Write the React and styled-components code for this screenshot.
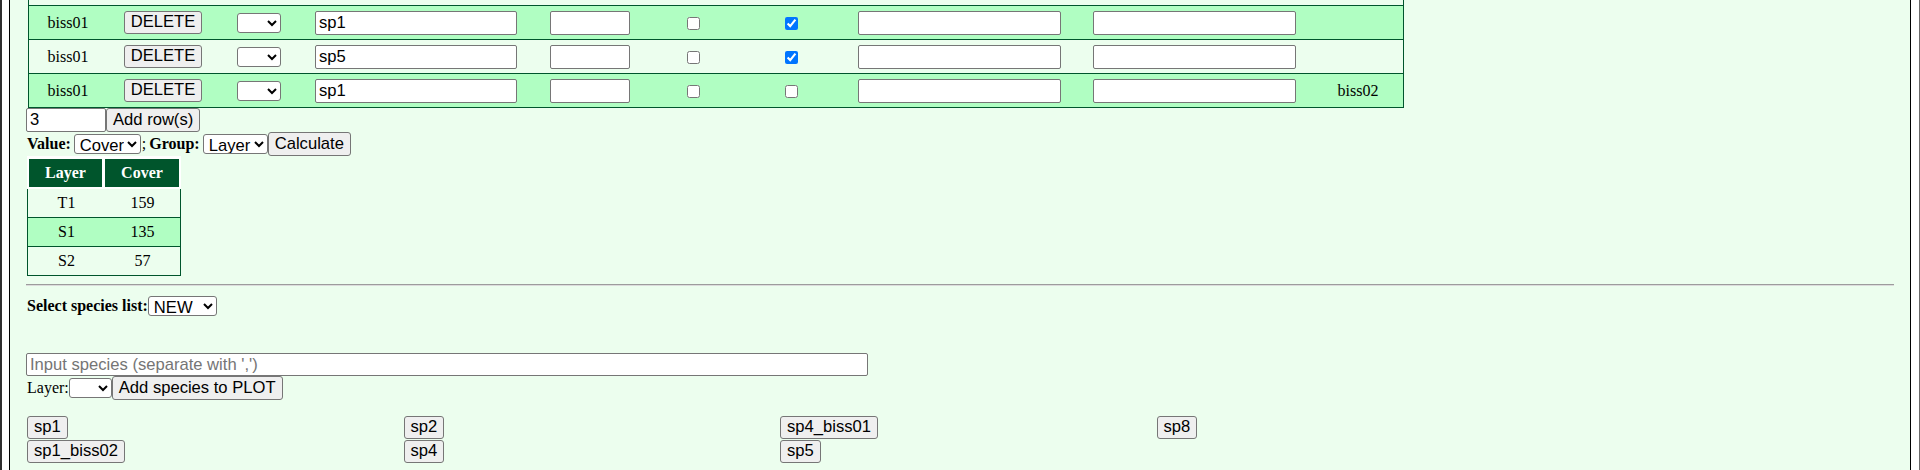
import React from "react";
import styled, { createGlobalStyle, css } from "styled-components";

const GlobalStyle = createGlobalStyle`
  html, body { margin: 0; padding: 0; background: #ffffff; }
  body {
    font-family: "Liberation Serif", "Times New Roman", serif;
    font-size: 16px;
    color: #000;
  }
`;

const GREEN_DARK = "#00552c";
const ROW_GREEN = "#b0fec2";
const BG = "#ecfeee";

const controlFont = css`
  font-family: "Liberation Sans", Arial, sans-serif;
  font-size: 16.6px;
  color: #000;
`;

const Frame = styled.div`
  display: flex;
  min-height: 100vh;
  box-sizing: border-box;
  border-left: 2px solid #2f2f2f;
  border-right: 1px solid #6b6b6b;
  padding: 0 8px 0 7px;
`;

const Container = styled.div`
  flex: 1;
  min-width: 0;
  border-left: 1px solid #000;
  border-right: 1px solid #000;
  background: ${BG};
  padding: 0 16px 40px;
`;

const MainTable = styled.table`
  border-collapse: separate;
  border-spacing: 0;
  table-layout: fixed;
  width: 1376px;
  margin-left: 2px;
  border-left: 1px solid ${GREEN_DARK};
  border-right: 1px solid ${GREEN_DARK};
`;

const Col = styled.col`
  width: ${(p) => p.$w}px;
`;

const Row = styled.tr`
  background: ${(p) => (p.$green ? ROW_GREEN : "transparent")};
`;

const Cell = styled.td`
  height: ${(p) => (p.$stub ? 5 : 33)}px;
  padding: 0;
  text-align: center;
  vertical-align: middle;
  border-bottom: 1px solid ${GREEN_DARK};
  white-space: nowrap;
`;

const TextInput = styled.input`
  ${controlFont};
  box-sizing: border-box;
  width: ${(p) => p.$w}px;
  height: ${(p) => p.$h || 24}px;
  padding: 1px 3px;
  margin: 0;
  border: 1px solid #767676;
  border-radius: 2px;
  background: #fff;
  vertical-align: middle;
  &::placeholder {
    color: #757575;
  }
`;

const Button = styled.button`
  ${controlFont};
  box-sizing: border-box;
  height: ${(p) => p.$h || 23}px;
  padding: 0 6px;
  margin: 0;
  border: 1px solid #767676;
  border-radius: 3px;
  background: #efefef;
  line-height: 1;
  vertical-align: middle;
  white-space: nowrap;
`;

const Select = styled.select`
  ${controlFont};
  box-sizing: border-box;
  width: ${(p) => p.$w}px;
  height: ${(p) => p.$h || 20}px;
  padding: 0 0 0 1px;
  margin: 0;
  border: 1px solid #767676;
  border-radius: 3px;
  background: #fff;
  vertical-align: middle;
`;

const Checkbox = styled.input.attrs({ type: "checkbox" })`
  width: 13px;
  height: 13px;
  margin: 0;
  vertical-align: middle;
  accent-color: #0075ff;
`;

const Line = styled.div`
  display: flex;
  align-items: ${(p) => p.$align || "center"};
  height: ${(p) => p.$h}px;
  margin-top: ${(p) => p.$mt || 0}px;
`;

const Label = styled.span`
  font-weight: ${(p) => (p.$bold ? "bold" : "normal")};
  margin-left: ${(p) => p.$ml || 0}px;
  margin-right: ${(p) => p.$mr || 0}px;
  white-space: nowrap;
`;

const Semi = styled.span`
  margin: 0 3px 0 1px;
`;

const ResultTable = styled.table`
  border-collapse: separate;
  border-spacing: 0;
  margin-left: 1px;
`;

const Th = styled.th`
  background: ${GREEN_DARK};
  color: #fff;
  font-weight: bold;
  height: 28px;
  width: ${(p) => p.$w}px;
  padding: 0;
  text-align: center;
  border-top: 3px solid #fff;
  border-bottom: 2px solid #fff;
  border-left: ${(p) => (p.$first ? 2 : 0)}px solid #fff;
  border-right: ${(p) => (p.$first ? 3 : 2)}px solid #fff;
`;

const Td = styled.td`
  height: 28px;
  width: ${(p) => p.$w}px;
  padding: 0;
  text-align: center;
  vertical-align: middle;
  border-bottom: 1px solid ${GREEN_DARK};
  border-left: ${(p) => (p.$first ? 1 : 0)}px solid ${GREEN_DARK};
  border-right: ${(p) => (p.$last ? 1 : 0)}px solid ${GREEN_DARK};
`;

const Divider = styled.hr`
  margin: 8px 0 0;
  height: 0;
  border: 0;
  border-top: 1px solid #9c9c9c;
  border-bottom: 1px solid #dcdcdc;
`;

const SpeciesGrid = styled.div`
  display: grid;
  grid-template-rows: repeat(2, auto);
  grid-auto-flow: column;
  grid-auto-columns: 376.5px;
  justify-items: start;
  row-gap: 1px;
  margin: 16px 0 0 1px;
`;

const cols = [78, 112, 80, 234, 114, 92, 104, 232, 238, 90];

const rows = [
  { sp: "sp1", c2: true, green: true, owner: "" },
  { sp: "sp5", c2: true, green: false, owner: "" },
  { sp: "sp1", c2: false, green: true, owner: "biss02" },
];

const results = [
  ["T1", "159"],
  ["S1", "135"],
  ["S2", "57"],
];

const species = ["sp1", "sp1_biss02", "sp2", "sp4", "sp4_biss01", "sp5", "sp8"];

export default function App() {
  return (
    <>
      <GlobalStyle />
      <Frame>
        <Container>
          <MainTable>
            <colgroup>
              {cols.map((w, i) => (
                <Col key={i} $w={w} />
              ))}
            </colgroup>
            <tbody>
              <Row>
                {cols.map((_, i) => (
                  <Cell key={i} $stub />
                ))}
              </Row>
              {rows.map((r, i) => (
                <Row key={i} $green={r.green}>
                  <Cell>biss01</Cell>
                  <Cell>
                    <Button>DELETE</Button>
                  </Cell>
                  <Cell>
                    <Select $w={44} defaultValue="">
                      <option value=""></option>
                    </Select>
                  </Cell>
                  <Cell>
                    <TextInput $w={202} defaultValue={r.sp} />
                  </Cell>
                  <Cell>
                    <TextInput $w={80} />
                  </Cell>
                  <Cell>
                    <Checkbox />
                  </Cell>
                  <Cell>
                    <Checkbox defaultChecked={r.c2} />
                  </Cell>
                  <Cell>
                    <TextInput $w={203} />
                  </Cell>
                  <Cell>
                    <TextInput $w={203} />
                  </Cell>
                  <Cell>{r.owner}</Cell>
                </Row>
              ))}
            </tbody>
          </MainTable>

          <Line $h={24} $align="flex-start">
            <TextInput $w={80} $h={24} defaultValue="3" />
            <Button $h={24}>Add row(s)</Button>
          </Line>

          <Line $h={24}>
            <Label $bold $ml={1} $mr={3}>
              Value:
            </Label>
            <Select $w={67} defaultValue="Cover">
              <option>Cover</option>
            </Select>
            <Semi>;</Semi>
            <Label $bold $mr={3}>
              Group:
            </Label>
            <Select $w={65} defaultValue="Layer">
              <option>Layer</option>
            </Select>
            <Button $h={24}>Calculate</Button>
          </Line>

          <ResultTable>
            <thead>
              <tr>
                <Th $first $w={73}>
                  Layer
                </Th>
                <Th $w={74}>Cover</Th>
              </tr>
            </thead>
            <tbody>
              {results.map(([l, v], i) => (
                <Row key={l} $green={i === 1}>
                  <Td $first $w={77}>
                    {l}
                  </Td>
                  <Td $last $w={75}>
                    {v}
                  </Td>
                </Row>
              ))}
            </tbody>
          </ResultTable>

          <Divider />

          <Line $h={22} $mt={9}>
            <Label $bold $ml={1}>
              Select species list:
            </Label>
            <Select $w={69} defaultValue="NEW">
              <option>NEW</option>
            </Select>
          </Line>

          <Line $h={23} $mt={36}>
            <TextInput
              $w={842}
              $h={23}
              placeholder="Input species (separate with ',')"
            />
          </Line>

          <Line $h={24}>
            <Label $ml={1}>Layer:</Label>
            <Select $w={43} defaultValue="">
              <option value=""></option>
            </Select>
            <Button $h={24}>Add species to PLOT</Button>
          </Line>

          <SpeciesGrid>
            {species.map((s) => (
              <Button key={s}>{s}</Button>
            ))}
          </SpeciesGrid>
        </Container>
      </Frame>
    </>
  );
}
